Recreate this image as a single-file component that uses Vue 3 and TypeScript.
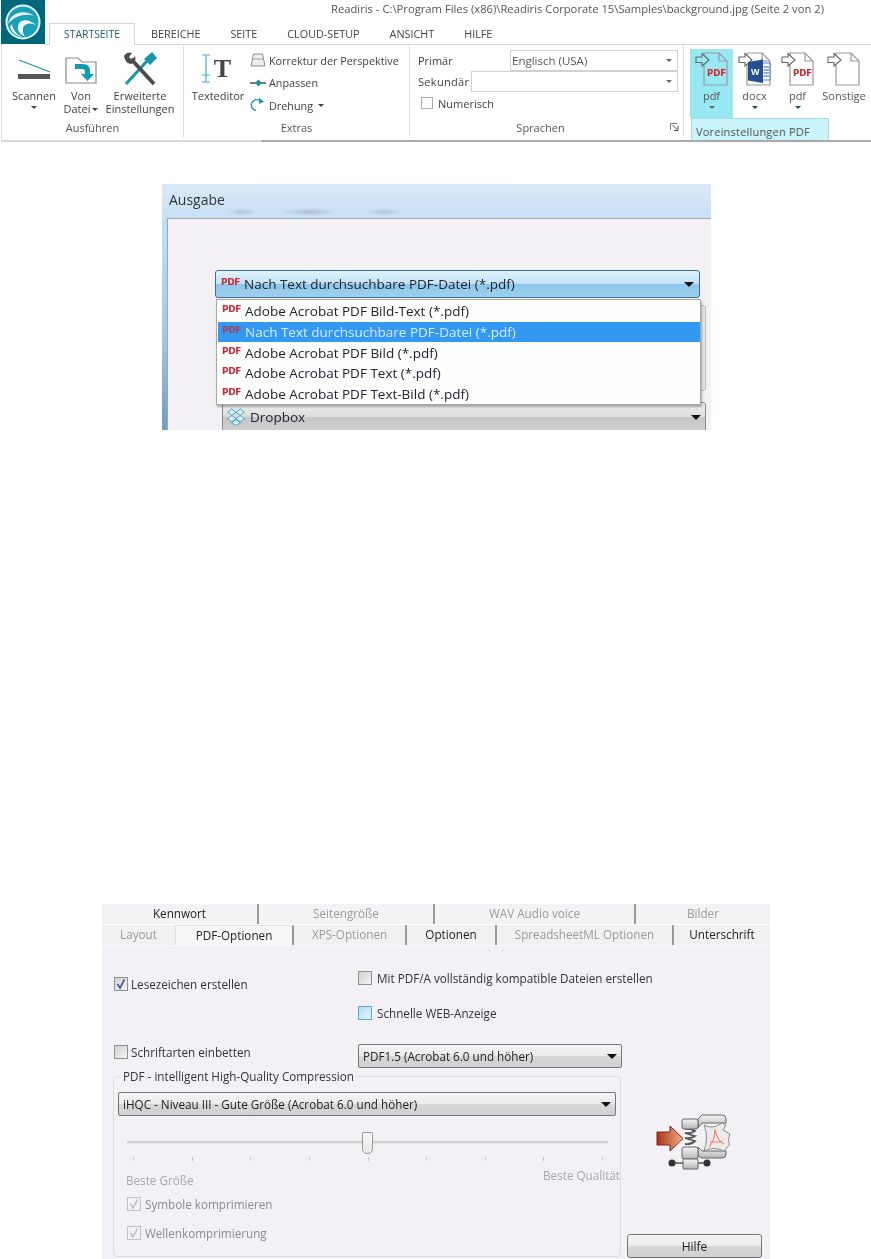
<script setup lang="ts">
const tabs = ['STARTSEITE', 'BEREICHE', 'SEITE', 'CLOUD-SETUP', 'ANSICHT', 'HILFE']

const formats = [
  { label: 'pdf', kind: 'pdf', active: true, caret: true },
  { label: 'docx', kind: 'word', active: false, caret: true },
  { label: 'pdf', kind: 'pdf', active: false, caret: true },
  { label: 'Sonstige', kind: 'blank', active: false, caret: false },
]

const menuItems = [
  { text: 'Adobe Acrobat PDF Bild-Text (*.pdf)', selected: false },
  { text: 'Nach Text durchsuchbare PDF-Datei (*.pdf)', selected: true },
  { text: 'Adobe Acrobat PDF Bild (*.pdf)', selected: false },
  { text: 'Adobe Acrobat PDF Text (*.pdf)', selected: false },
  { text: 'Adobe Acrobat PDF Text-Bild (*.pdf)', selected: false },
]

const upperTabs = [
  { text: 'Kennwort', width: 157, dark: true },
  { text: 'Seitengröße', width: 176, dark: false },
  { text: 'WAV Audio voice', width: 201, dark: false },
  { text: 'Bilder', width: 134, dark: false },
]

const lowerTabs = [
  { text: 'Layout', width: 73, dark: false, active: false, plain: true },
  { text: 'PDF-Optionen', width: 119, dark: true, active: true, plain: false },
  { text: 'XPS-Optionen', width: 113, dark: false, active: false, plain: false },
  { text: 'Optionen', width: 90, dark: true, active: false, plain: false },
  { text: 'SpreadsheetML Optionen', width: 177, dark: false, active: false, plain: false },
  { text: 'Unterschrift', width: 96, dark: true, active: false, plain: false },
]

const ticks = 9
</script>

<template>
  <div class="page">
    <header class="ribbon">
      <div class="ribbon-top">
        <div class="logo">
          <svg width="44" height="44" viewBox="0 0 44 44">
            <circle cx="22" cy="22" r="16.5" fill="#17a3b5" stroke="#e9f6f8" stroke-width="2" />
            <path d="M7 24 C9 14 22 8 33 16 C25 13 14 15 7 24 Z" fill="#f2fbfc" />
            <path d="M35 25 C28 18 18 19 17 26 C16.5 31 19 34 24 37 C21 32 21 27 24 25 C27 23 31 23 35 25 Z" fill="#f2fbfc" />
            <path d="M9 27 C11 33 16 36 21 37 C16 34 12 31 11 24 Z" fill="#f2fbfc" />
          </svg>
        </div>
        <div class="top-main">
          <div class="titlebar">Readiris - C:\Program Files (x86)\Readiris Corporate 15\Samples\background.jpg (Seite 2 von 2)</div>
          <nav class="tabs">
            <span v-for="(t, i) in tabs" :key="t" class="tab" :class="{ 'tab--active': i === 0 }">{{ t }}</span>
          </nav>
        </div>
      </div>

      <div class="ribbon-body">
        <section class="group group--run">
          <div class="group-content">
            <div class="big-btn big-btn--scan">
              <svg class="big-icon" width="34" height="36" viewBox="0 0 34 36">
                <path d="M2 9 L33 21" stroke="#1796aa" stroke-width="1.3" fill="none" />
                <rect x="1" y="23" width="32" height="5" fill="#555" />
              </svg>
              <span>Scannen</span>
              <i class="caret" />
            </div>
            <div class="big-btn big-btn--file">
              <svg class="big-icon" width="34" height="36" viewBox="0 0 34 36">
                <path d="M2 7 H14 L18 11 H32 V32 H2 Z" fill="#fff" stroke="#8a8a8a" stroke-width="1.2" />
                <path d="M11 13 H19 Q26 13 26 20 V23 H30 L23.5 30 L17 23 H21 V21 Q21 18 18 18 H11 Z" fill="#109db3" />
              </svg>
              <span>Von</span>
              <span>Datei<i class="caret caret--inline" /></span>
            </div>
            <div class="big-btn big-btn--tools">
              <svg class="big-icon" width="38" height="36" viewBox="0 0 38 36">
                <path d="M5 33 L26 10" stroke="#1796aa" stroke-width="3" />
                <path d="M23 8 L31 1 L36 7 L29 14 Z" fill="#1796aa" />
                <path d="M10 8 L33 33" stroke="#4c4c4c" stroke-width="4" />
                <path d="M3 5 Q6 0 11 2 L8 6 L11 9 L14 5 Q16 11 10 13 Q4 12 3 5 Z" fill="#4c4c4c" />
              </svg>
              <span>Erweiterte</span>
              <span>Einstellungen</span>
            </div>
          </div>
          <div class="group-label">Ausführen</div>
        </section>

        <section class="group group--extras">
          <div class="group-content">
            <div class="big-btn big-btn--text">
              <div class="editor-icon">
                <svg width="14" height="30" viewBox="0 0 14 30">
                  <path d="M3 1 H11 M7 1 V28 M3 28 H11 M3 21 H11" stroke="#47b5c4" stroke-width="1.2" fill="none" />
                </svg>
                <b>T</b>
              </div>
              <span>Texteditor</span>
            </div>
            <div class="small-list">
              <div class="small-btn">
                <svg width="16" height="14" viewBox="0 0 16 14">
                  <path d="M3.5 1 H12.5 L15 13 H1 Z" fill="#eee" stroke="#8c8c8c" />
                  <path d="M2.5 6 H13.5" stroke="#a5a5a5" />
                </svg>
                Korrektur der Perspektive
              </div>
              <div class="small-btn">
                <svg width="16" height="14" viewBox="0 0 16 14">
                  <path d="M0 7 H16" stroke="#444" stroke-width="1.4" />
                  <path d="M8.5 3.5 L12 7 L8.5 10.5 L5 7 Z" fill="#1796aa" />
                </svg>
                Anpassen
              </div>
              <div class="small-btn">
                <svg width="16" height="14" viewBox="0 0 16 14">
                  <path d="M6 12.5 A5.5 5.5 0 1 1 10.5 3" stroke="#1796aa" stroke-width="1.3" fill="none" />
                  <path d="M9 0 L14 3.5 L9 6 Z" fill="#1796aa" />
                </svg>
                Drehung <i class="caret caret--side" />
              </div>
            </div>
          </div>
          <div class="group-label">Extras</div>
        </section>

        <section class="group group--lang">
          <div class="lang-form">
            <div class="lang-row">
              <span class="lang-name">Primär</span>
              <div class="lang-select lang-select--primary">Englisch (USA)<i class="caret caret--grey" /></div>
            </div>
            <div class="lang-row">
              <span class="lang-name lang-name--short">Sekundär</span>
              <div class="lang-select lang-select--second"><i class="caret caret--grey" /></div>
            </div>
            <div class="numeric">
              <i class="lang-check" />
              Numerisch
            </div>
          </div>
          <div class="group-label group-label--lang">Sprachen</div>
          <svg class="launcher" width="9" height="8" viewBox="0 0 9 8">
            <path d="M0.5 7 V0.5 H7" stroke="#777" fill="none" />
            <path d="M2.5 2 L7 6.5 M8 3 V7.5 H4" stroke="#444" fill="none" />
          </svg>
        </section>

        <section class="group group--formats">
          <div v-for="(f, i) in formats" :key="i" class="format" :class="{ 'format--active': f.active, 'format--wide': !f.caret }">
            <svg width="38" height="34" viewBox="0 0 38 34">
              <path d="M10 1 H25 L33 9 V33 H10 Z" fill="none" stroke="#9a9a9a" stroke-width="1.2" />
              <path d="M25 1 V9 H33" fill="none" stroke="#9a9a9a" stroke-width="1.2" />
              <path d="M2 5 H8 V1.5 L15 8 L8 14 V10.5 H2 Z" :fill="f.active ? '#98e8f4' : '#fff'" stroke="#666" stroke-width="1.1" />
              <text v-if="f.kind === 'pdf'" x="13" y="24" class="doc-pdf">PDF</text>
              <template v-if="f.kind === 'word'">
                <path d="M25 11 H33 V28 H25 Z" fill="#fff" stroke="#2b5fa8" stroke-width="0.8" />
                <path d="M26.5 15 H32 M26.5 18 H32 M26.5 21 H32 M26.5 24 H32" stroke="#2b5fa8" />
                <path d="M11 10 L26 7.5 V31 L11 28.5 Z" fill="#23508f" />
                <text x="14" y="23" class="doc-word">W</text>
              </template>
            </svg>
            <span class="format-label">{{ f.label }}</span>
            <i v-if="f.caret" class="caret" :class="{ 'caret--grey': f.active, 'caret--teal': !f.active }" />
          </div>
          <div class="tooltip">Voreinstellungen PDF</div>
        </section>
      </div>
    </header>

    <section class="output">
      <h2 class="output-title">Ausgabe</h2>
      <div class="output-panel">
        <div class="combo combo--open">
          <b class="pdf-tag">PDF</b>
          <span>Nach Text durchsuchbare PDF-Datei (*.pdf)</span>
          <i class="combo-arrow" />
        </div>
        <div class="behind-fields" />
        <div class="combo combo--dropbox">
          <svg width="20" height="18" viewBox="0 0 18 17">
            <path d="M5 1 L9 4 L5 7 L1 4 Z M13 1 L17 4 L13 7 L9 4 Z M5 7 L9 10 L5 13 L1 10 Z M13 7 L17 10 L13 13 L9 10 Z M5 14 L9 16.5 L13 14 L9 11 Z" fill="#d6eef3" stroke="#4fa7bb" stroke-width="0.9" />
          </svg>
          <span>Dropbox</span>
          <i class="combo-arrow" />
        </div>
        <ul class="menu">
          <li v-for="m in menuItems" :key="m.text" class="menu-item" :class="{ 'menu-item--selected': m.selected }">
            <b class="pdf-tag">PDF</b>
            <span>{{ m.text }}</span>
          </li>
        </ul>
      </div>
    </section>

    <section class="options">
      <div class="tab-row tab-row--upper">
        <span v-for="t in upperTabs" :key="t.text" class="opt-tab" :class="{ 'opt-tab--dark': t.dark }" :style="{ width: t.width + 'px' }">{{ t.text }}</span>
      </div>
      <div class="tab-row tab-row--lower">
        <span v-for="t in lowerTabs" :key="t.text" class="opt-tab" :class="{ 'opt-tab--dark': t.dark, 'opt-tab--active': t.active, 'opt-tab--plain': t.plain }" :style="{ width: t.width + 'px' }">{{ t.text }}</span>
      </div>

      <div class="opt-body">
        <div class="opt-top">
          <div class="opt-left">
            <label class="check check--first"><i class="box"><svg width="12" height="12" viewBox="0 0 12 12"><path d="M2.5 6 L5 10 L9.5 1.5" fill="none" stroke="#4a5f9c" stroke-width="1.7" /></svg></i>Lesezeichen erstellen</label>
            <label class="check check--fonts"><i class="box" />Schriftarten einbetten</label>
          </div>
          <div class="opt-right">
            <label class="check"><i class="box" />Mit PDF/A vollständig kompatible Dateien erstellen</label>
            <label class="check check--web"><i class="box box--hover" />Schnelle WEB-Anzeige</label>
            <div class="drop drop--version">PDF1.5 (Acrobat 6.0 und höher)<i class="combo-arrow" /></div>
          </div>
        </div>

        <div class="opt-lower">
          <div class="quality">
            <span class="legend">PDF - intelligent High-Quality Compression</span>
            <div class="drop">iHQC - Niveau III - Gute Größe (Acrobat 6.0 und höher)<i class="combo-arrow" /></div>
            <div class="slider">
              <i class="thumb" />
            </div>
            <div class="ticks"><i v-for="n in ticks" :key="n" /></div>
            <div class="range-labels">
              <span class="range-low">Beste Größe</span>
              <span class="range-high">Beste Qualität</span>
            </div>
            <label class="check check--off check--sym"><i class="box box--off"><svg width="12" height="12" viewBox="0 0 12 12"><path d="M2.5 6 L5 10 L9.5 1.5" fill="none" stroke="#bcbcbc" stroke-width="1.5" /></svg></i>Symbole komprimieren</label>
            <label class="check check--off check--wave"><i class="box box--off"><svg width="12" height="12" viewBox="0 0 12 12"><path d="M2.5 6 L5 10 L9.5 1.5" fill="none" stroke="#bcbcbc" stroke-width="1.5" /></svg></i>Wellenkomprimierung</label>
          </div>
          <div class="side">
            <svg class="clamp" width="76" height="56" viewBox="0 0 76 56">
              <defs>
                <linearGradient id="arrowFill" x1="0" x2="1" y1="0" y2="0">
                  <stop offset="0" stop-color="#a5331c" />
                  <stop offset="1" stop-color="#f0b088" />
                </linearGradient>
                <linearGradient id="metal" x1="0" x2="0" y1="0" y2="1">
                  <stop offset="0" stop-color="#f6f6f6" />
                  <stop offset="1" stop-color="#b4b4b4" />
                </linearGradient>
              </defs>
              <path d="M42 5 L46 1 H66 Q70 1 70 5 V9 H46 L42 14 Z" fill="url(#metal)" stroke="#666" />
              <path d="M42 33 L46 37 H70 V40 Q70 44 66 44 H46 L42 42 Z" fill="url(#metal)" stroke="#666" />
              <path d="M48 11 Q56 16 66 9 L70 11 L67 16 L74 20 Q71 28 74 30 L68 37 Q58 32 48 37 Q53 24 48 11 Z" fill="#eeeaea" stroke="#8a8a8a" />
              <path d="M53 33 Q59 26 59 15 Q61 27 68 30 M54 28 H67" fill="none" stroke="#e8866a" stroke-width="1.1" />
              <path d="M29 15 Q35 14 39 17 Q35 20 29 19 Q35 21 39 22 Q35 25 29 24 Q35 26 39 27 Q35 31 29 30" fill="none" stroke="#555" stroke-width="1.8" />
              <rect x="26" y="5" width="16" height="10" rx="2" fill="url(#metal)" stroke="#666" />
              <rect x="26" y="33" width="16" height="12" rx="2" fill="url(#metal)" stroke="#666" />
              <path d="M14 49 H53" stroke="#555" stroke-width="1.5" />
              <rect x="27" y="45" width="15" height="10" rx="1" fill="url(#metal)" stroke="#666" />
              <circle cx="16" cy="49" r="3.5" fill="#333" />
              <circle cx="51" cy="49" r="3.5" fill="#333" />
              <path d="M1 18 H14 V12 L27 24.5 L14 37 V31 H1 Z" fill="url(#arrowFill)" stroke="#8a2412" />
            </svg>
            <button class="help" type="button">Hilfe</button>
          </div>
        </div>
      </div>
    </section>
  </div>
</template>

<style>
html,
body {
  margin: 0;
  background: #fff;
}
</style>

<style scoped>
.page {
  width: 871px;
  height: 1259px;
  overflow: hidden;
  background: #fff;
  font-family: "Open Sans", "Noto Sans", sans-serif;
}

/* ribbon */
.ribbon {
  height: 141px;
  font-size: 11px;
  color: #3f3f3f;
  filter: blur(0.3px);
}

.ribbon-top {
  display: flex;
  height: 45px;
}

.logo {
  width: 44px;
  height: 44px;
  margin-left: 1px;
  background: #00677a;
  flex-shrink: 0;
}

.logo svg {
  display: block;
}

.top-main {
  flex: 1;
  display: flex;
  flex-direction: column;
  min-width: 0;
}

.titlebar {
  height: 23px;
  padding-right: 47px;
  box-sizing: border-box;
  text-align: right;
  line-height: 17px;
  font-size: 11.24px;
  color: #555;
  white-space: nowrap;
}

.tabs {
  display: flex;
  height: 22px;
  padding-left: 4px;
  border-bottom: 1px solid #d6d6d6;
  box-sizing: border-box;
}

.tab {
  padding: 0 15px;
  line-height: 22px;
  font-size: 10.8px;
  color: #444;
  white-space: nowrap;
}

.tab--active {
  width: 86px;
  height: 22px;
  padding: 0 0 0 14px;
  margin-right: 1px;
  box-sizing: border-box;
  background: #fff;
  border: 1px solid #d6d6d6;
  border-bottom: none;
  line-height: 21px;
  font-size: 10.4px;
  color: #1f5f70;
}

.ribbon-body {
  display: flex;
  height: 95px;
  margin-left: 1px;
  border-left: 1px solid #dcdcdc;
  border-bottom: 2px solid #d8d8d8;
  position: relative;
}

.ribbon-body::after {
  content: "";
  position: absolute;
  left: 259px;
  right: 0;
  bottom: -2px;
  height: 2px;
  background: #a9a9a9;
}

.group {
  position: relative;
  display: flex;
  flex: none;
  flex-direction: column;
  box-sizing: border-box;
}

.group--run {
  width: 182px;
  border-right: 1px solid #dcdcdc;
  margin-bottom: 3px;
}

.group--extras {
  width: 226px;
  border-right: 1px solid #dcdcdc;
  margin-bottom: 3px;
}

.group--lang {
  width: 274px;
  border-right: 1px solid #dcdcdc;
  margin-bottom: 3px;
}

.group--formats {
  flex: 1;
  flex-direction: row;
  align-items: flex-start;
  padding: 4px 0 0 6px;
}

.group-content {
  display: flex;
  flex: none;
  height: 74px;
}

.group-label {
  height: 16px;
  text-align: center;
  line-height: 18px;
  color: #555;
}

.group-label--lang {
  padding-right: 12px;
}

.big-btn {
  display: flex;
  flex-direction: column;
  align-items: center;
  line-height: 13px;
  white-space: nowrap;
}

.big-icon {
  display: block;
  margin: 6px 0 2px;
  flex-shrink: 0;
}

.big-btn--scan {
  width: 52px;
  margin-left: 6px;
}

.big-btn--file {
  width: 44px;
  margin-left: -1px;
}

.big-btn--tools {
  width: 70px;
  margin-left: 2px;
}

.big-btn--text {
  width: 58px;
  margin-left: 5px;
}

.editor-icon {
  display: flex;
  align-items: center;
  height: 36px;
  margin: 6px 0 2px;
  gap: 1px;
}

.editor-icon svg {
  display: block;
  margin-left: -6px;
}

.editor-icon b {
  font: bold 26px/30px "Liberation Serif", serif;
  color: #444;
}

.small-list {
  margin-left: 3px;
  padding-top: 8px;
  display: flex;
  flex-direction: column;
  gap: 8.5px;
}

.small-btn {
  display: flex;
  align-items: center;
  gap: 3px;
  height: 14px;
  font-size: 10.8px;
  white-space: nowrap;
}

.caret {
  display: block;
  width: 0;
  height: 0;
  margin-top: 4px;
  border: 3px solid transparent;
  border-top: 3px solid #444;
  border-bottom: none;
}

.caret--inline {
  display: inline-block;
  margin: 0 0 2px 2px;
}

.caret--side {
  margin: 0 0 0 2px;
}

.caret--grey {
  border-top-color: #666;
}

.caret--teal {
  border-top-color: #14505c;
}

.lang-form {
  flex: none;
  box-sizing: border-box;
  padding: 5px 5px 0 8px;
  height: 74px;
}

.lang-row {
  display: flex;
  height: 21px;
  align-items: center;
}

.lang-name {
  width: 92px;
  flex-shrink: 0;
}

.lang-name--short {
  width: 53px;
  letter-spacing: 0.3px;
}

.lang-select {
  flex: 1;
  height: 21px;
  box-sizing: border-box;
  border: 1px solid #d0d0d0;
  background: #fff;
  display: flex;
  align-items: center;
  justify-content: space-between;
  padding: 0 5px 0 1px;
  font-size: 11.5px;
  color: #555;
}

.lang-select--second {
  justify-content: flex-end;
}

.lang-select .caret {
  margin: 0;
}

.numeric {
  display: flex;
  align-items: center;
  gap: 5px;
  margin: 5px 0 0 3px;
  height: 12px;
}

.lang-check {
  width: 10px;
  height: 10px;
  border: 1px solid #aaa;
  background: #fff;
}

.launcher {
  position: absolute;
  right: 4px;
  bottom: 6px;
}

.format {
  width: 43px;
  height: 69px;
  flex: none;
  display: flex;
  flex-direction: column;
  align-items: center;
  color: #555;
}

.format svg {
  display: block;
  margin: 3px 0 0 2px;
}

.format--active {
  background: #98e8f4;
}

.format--wide {
  width: 50px;
}

.format-label {
  line-height: 14px;
  margin-top: 3px;
  white-space: nowrap;
}

.format .caret {
  margin-top: 3px;
}

.doc-pdf {
  font: bold 8.5px "DejaVu Sans", sans-serif;
  fill: #d9232e;
}

.doc-word {
  font: bold 9px "Liberation Sans", sans-serif;
  fill: #fff;
}

.tooltip {
  position: absolute;
  left: 7px;
  top: 73px;
  width: 138px;
  height: 24px;
  box-sizing: border-box;
  padding-left: 4px;
  background: #c9f5fb;
  border: 1px solid #a9d9e0;
  border-bottom: none;
  line-height: 26px;
  letter-spacing: 0.2px;
  color: #555;
  white-space: nowrap;
}

/* output dialog */
.output {
  width: 549px;
  height: 246px;
  margin: 43px 0 0 162px;
  overflow: hidden;
  background:
    radial-gradient(ellipse 14px 4px at 80px 28px, rgba(120, 130, 150, 0.3), transparent),
    radial-gradient(ellipse 28px 4px at 147px 28px, rgba(120, 130, 150, 0.35), transparent),
    radial-gradient(ellipse 18px 4px at 222px 28px, rgba(120, 130, 150, 0.3), transparent),
    linear-gradient(180deg, #dbe9f6 0, #c6e0f6 34px, #a4c4de 160px, #6f9cc0 246px);
  filter: blur(0.4px);
}

.output-title {
  margin: 0;
  height: 34px;
  padding: 6px 0 0 7px;
  box-sizing: border-box;
  font: normal 14px/20px "Open Sans", sans-serif;
  color: #333;
}

.output-panel {
  position: relative;
  height: 212px;
  margin-left: 5px;
  box-sizing: border-box;
  padding: 51px 0 0 47px;
  background: #f3f1f5;
  border-top: 1px solid #a6a6a6;
  border-left: 1px solid #a6a6a6;
}

.combo {
  display: flex;
  align-items: center;
  width: 485px;
  height: 28px;
  box-sizing: border-box;
  padding: 0 5px 0 5px;
  border-radius: 3px;
  font-size: 13.5px;
  color: #223;
  white-space: nowrap;
}

.combo--open {
  background: linear-gradient(180deg, #e2f2fc 0, #c1e3f8 48%, #8fc6e8 52%, #9cd0ee 100%);
  border: 1px solid #3a6f8f;
}

.combo--open span {
  margin-left: 2px;
}

.combo--dropbox {
  position: relative;
  z-index: 1;
  width: 484px;
  margin: 104px 0 0 7px;
  padding: 0 4px 0 3px;
  height: 30px;
  background: linear-gradient(180deg, #efefef 0, #dcdcdc 50%, #c6c6c6 52%, #d0d0d0 100%);
  border: 1px solid #8a8a8a;
}

.combo--dropbox span {
  margin-left: 4px;
}

.behind-fields {
  position: absolute;
  left: 60px;
  top: 86px;
  width: 476px;
  height: 84px;
  background: #e6e6e8;
  border: 1px solid #bbb;
  border-radius: 3px;
}

.combo-arrow {
  margin-left: auto;
  width: 0;
  height: 0;
  border: 5px solid transparent;
  border-top: 5px solid #111;
  border-bottom: none;
}

.pdf-tag {
  width: 18px;
  margin-right: 3px;
  margin-top: -4px;
  font: bold 9px/10px "DejaVu Sans", sans-serif;
  letter-spacing: -0.4px;
  color: #c8293b;
  flex-shrink: 0;
}

.menu {
  position: absolute;
  z-index: 2;
  left: 48px;
  top: 80px;
  width: 485px;
  height: 106px;
  box-sizing: border-box;
  margin: 0;
  padding: 1px 0 0 1px;
  list-style: none;
  background: #fcfefc;
  border: 1px solid #a9a9a9;
  box-shadow: 1px 2px 2px rgba(0, 0, 0, 0.3);
}

.menu-item {
  display: flex;
  align-items: center;
  height: 20.7px;
  padding-left: 4px;
  font-size: 13.5px;
  color: #223;
  white-space: nowrap;
}

.menu-item .pdf-tag {
  width: 18px;
  margin-right: 5px;
}

.menu-item--selected {
  background: #3399f0;
  color: #d6ebff;
}

.menu-item--selected .pdf-tag {
  color: #a8405f;
}

/* pdf options */
.options {
  width: 668px;
  margin: 474px 0 0 102px;
  font-size: 11.7px;
  color: #333;
  filter: blur(0.35px);
}

.tab-row {
  display: flex;
  height: 20px;
  background: #f3f3f5;
  white-space: nowrap;
}

.tab-row--lower {
  height: 21px;
  border-top: 1px solid #fff;
  box-sizing: border-box;
  background: #f1f1f3;
}

.opt-tab {
  box-sizing: border-box;
  text-align: center;
  line-height: 19px;
  color: #9b9b9b;
  border-right: 2px solid #9a9a9a;
}

.opt-tab:last-child,
.opt-tab--plain {
  border-right: none;
}

.opt-tab--dark {
  color: #222;
}

.opt-tab--active {
  background: #f7f6f8;
  border-top: 1px solid #e2e2e2;
  border-left: 1px solid #e2e2e2;
}

.opt-body {
  height: 314px;
  box-sizing: border-box;
  background: #f3f1f5;
  border-top: 1px solid #fafafa;
}

.opt-top {
  display: grid;
  grid-template-columns: 244px 1fr;
  padding: 25px 0 0 12px;
}

.check {
  display: flex;
  align-items: center;
  height: 14px;
  white-space: nowrap;
}

.check--first {
  margin-top: 6px;
}

.check--fonts {
  margin-top: 54px;
}

.check--web {
  margin-top: 21px;
}

.check--off {
  color: #8b8b8b;
}

.box {
  display: flex;
  align-items: center;
  justify-content: center;
  width: 14px;
  height: 14px;
  margin-right: 3px;
  box-sizing: border-box;
  border: 1px solid #8f8f8f;
  background: linear-gradient(135deg, #d2d2d2, #f4f4f4);
  flex-shrink: 0;
}

.opt-right .box {
  margin-right: 5px;
}

.check--off .box {
  margin-right: 4px;
}

.box--hover {
  border-color: #5aa6d6;
  background: linear-gradient(135deg, #b5dcf4, #e3f3fc);
}

.box--off {
  border-color: #c2c2c2;
  background: #f3f1f5;
}

.drop {
  display: flex;
  align-items: center;
  height: 24px;
  box-sizing: border-box;
  padding: 0 4px 0 4px;
  border: 1px solid #767676;
  border-radius: 2px;
  background: linear-gradient(180deg, #f4f4f4 0, #ebebeb 48%, #d8d8d8 52%, #cfcfcf 100%);
  color: #222;
  white-space: nowrap;
}

.drop--version {
  width: 264px;
  margin-top: 24px;
}

.opt-lower {
  display: flex;
  margin: 8px 0 0 11px;
}

.quality {
  position: relative;
  width: 508px;
  height: 181px;
  box-sizing: border-box;
  padding: 15px 4px 0;
  border: 1px solid #dedee2;
  border-radius: 4px;
}

.legend {
  position: absolute;
  left: 6px;
  top: -8px;
  padding: 0 3px;
  background: #f3f1f5;
  line-height: 15px;
  white-space: nowrap;
}

.slider {
  position: relative;
  height: 2px;
  margin: 25px 8px 0 9px;
  background: #cfcfcf;
  border-bottom: 1px solid #e9e9e9;
}

.thumb {
  position: absolute;
  left: 235px;
  top: -9px;
  width: 11px;
  height: 22px;
  box-sizing: border-box;
  border: 1px solid #999;
  border-radius: 2px 2px 5px 5px;
  background: linear-gradient(180deg, #f8f8f8, #e8e8e8);
}

.ticks {
  display: flex;
  justify-content: space-between;
  margin: 13px 13px 0 15px;
}

.ticks i {
  display: block;
  width: 1px;
  height: 4px;
  background: #c8c8c8;
}

.range-labels {
  display: flex;
  justify-content: space-between;
  height: 28px;
  margin: 5px -4px 0 8px;
  color: #a8a8a8;
  line-height: 14px;
}

.range-low {
  margin-top: 7px;
}

.range-high {
  margin-top: 2px;
}

.check--sym {
  margin: 3px 0 0 9px;
}

.check--wave {
  margin: 15px 0 0 9px;
}

.side {
  flex: 1;
  display: flex;
  flex-direction: column;
  padding-left: 6px;
}

.clamp {
  display: block;
  margin: 38px 0 0 29px;
}

.help {
  width: 135px;
  height: 24px;
  margin-top: 64px;
  padding: 0;
  border: 1px solid #767676;
  border-radius: 3px;
  background: linear-gradient(180deg, #f4f4f4 0, #ebebeb 48%, #d8d8d8 52%, #cfcfcf 100%);
  font: 12px "Open Sans", sans-serif;
  color: #222;
}
</style>
